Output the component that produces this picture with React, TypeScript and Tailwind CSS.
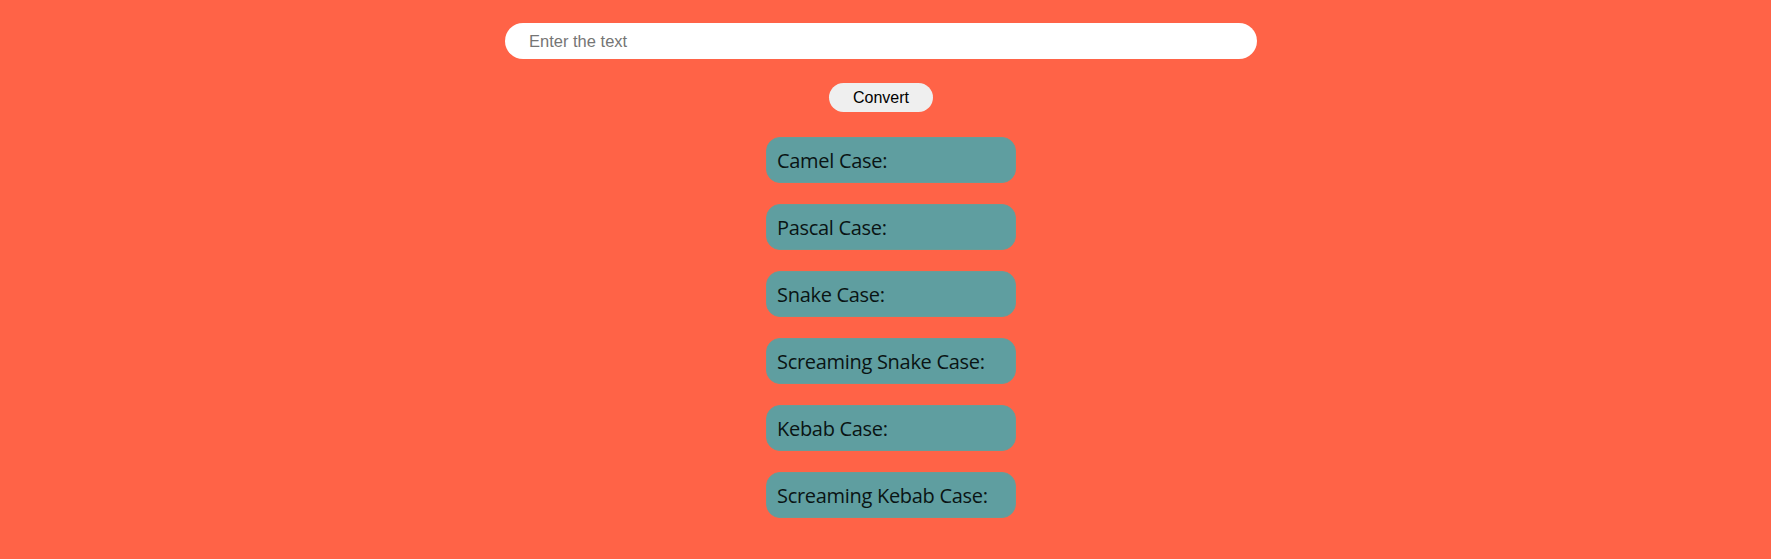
import { FC, useState } from "react";

const cases = [
    "Camel Case:",
    "Pascal Case:",
    "Snake Case:",
    "Screaming Snake Case:",
    "Kebab Case:",
    "Screaming Kebab Case:",
];

const ResultCard: FC<{ label: string }> = ({ label }) => (
    <div className="w-[250px] h-[46px] flex items-center pl-[10px] pt-[2px] rounded-[14px] bg-[#5f9ea0] border border-[#6a9c98]">
        <span className="text-[20px] font-medium text-[#0a1414] font-['Open_Sans','Noto_Sans',sans-serif] tracking-[-0.3px]">{label}</span>
    </div>
);

const App: FC = () => {
    const [text, setText] = useState("");

    return (
        <div className="w-full min-h-[559px] bg-[#ff6347] flex flex-col items-center pt-[23px]">
            <input
                value={text}
                onChange={(e) => setText(e.target.value)}
                placeholder="Enter the text"
                className="w-[752px] h-[36px] mr-[9px] rounded-full bg-white pl-[24px] outline-none text-[16.5px] font-['Liberation_Sans',Arial,sans-serif] text-black placeholder:text-[#757575]"
            />
            <button className="mt-[24px] mr-[9px] w-[104px] h-[29px] rounded-full bg-[#efefef] text-[16px] text-black font-['Liberation_Sans',Arial,sans-serif]">
                Convert
            </button>
            <div className="mt-[25px] ml-[11px] flex flex-col gap-[21px]">
                {cases.map((c) => (
                    <ResultCard key={c} label={c} />
                ))}
            </div>
        </div>
    );
};

export default App;
